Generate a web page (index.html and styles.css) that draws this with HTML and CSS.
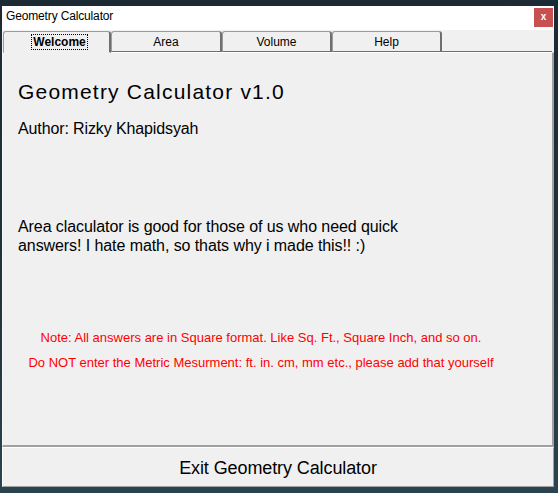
FILE: index.html
```html
<!DOCTYPE html>
<html>
<head>
<meta charset="utf-8">
<link rel="stylesheet" href="styles.css">
</head>
<body>
<div class="window">
  <div class="titlebar">
    <span class="title">Geometry Calculator</span>
    <span class="close">x</span>
  </div>
  <div class="tabstrip">
    <div class="tab tab-sel tab-w1"><span class="lbl focus">Welcome</span></div>
    <div class="tab tab-w2"><span class="lbl">Area</span></div>
    <div class="tab tab-w3"><span class="lbl">Volume</span></div>
    <div class="tab tab-w3"><span class="lbl">Help</span></div>
    <div class="tab-fill"></div>
  </div>
  <div class="panel">
    <h1 class="heading">Geometry Calculator v1.0</h1>
    <p class="author">Author: Rizky Khapidsyah</p>
    <p class="desc">Area claculator is good for those of us who need quick<br>answers! I hate math, so thats why i made this!! :)</p>
    <div class="notes">
      <p class="note">Note: All answers are in Square format. Like Sq. Ft., Square Inch, and so on.</p>
      <p class="note">Do NOT enter the Metric Mesurment: ft. in. cm, mm etc., please add that yourself</p>
    </div>
  </div>
  <div class="exit">Exit Geometry Calculator</div>
</div>
</body>
</html>
```
FILE: styles.css
```css
html, body {
  margin: 0;
  padding: 0;
}
body {
  width: 558px;
  height: 493px;
  overflow: hidden;
  background: linear-gradient(180deg, #1b2a33 0%, #22333c 60%, #2b4350 100%);
  font-family: "Liberation Sans", Arial, sans-serif;
  color: #000;
}
.window {
  margin-left: 2px;
  margin-top: 6px;
  width: 552px;
  background: #f0f0f0;
}
.titlebar {
  height: 24px;
  background: #fff;
  display: flex;
  align-items: flex-start;
  justify-content: space-between;
}
.title {
  font-size: 12px;
  line-height: 21px;
  padding-left: 4px;
  letter-spacing: -0.15px;
}
.close {
  margin-top: 2px;
  margin-right: 1px;
  width: 19px;
  height: 19px;
  background: #c75050;
  color: #fff;
  font-weight: bold;
  font-size: 10px;
  line-height: 18px;
  text-align: center;
}
.tabstrip {
  display: flex;
  padding-top: 1px;
  padding-left: 1px;
  height: 21px;
}
.tab {
  box-sizing: border-box;
  height: 21px;
  border-top: 1px solid #9c9c9c;
  border-left: 1px solid #9c9c9c;
  border-right: 2px solid #6f6f6f;
  border-bottom: 1px solid #6f6f6f;
  border-radius: 3px 3px 0 0;
  background: #f0f0f0;
  display: flex;
  justify-content: center;
  align-items: flex-start;
  padding-top: 2px;
  font-size: 12px;
}
.tab-w1 { width: 108px; }
.tab-w2 { width: 111px; }
.tab-w3 { width: 110px; }
.tab-sel {
  border-bottom-color: #f0f0f0;
  height: 22px;
  margin-bottom: -1px;
  position: relative;
  z-index: 1;
}
.tab-fill {
  flex: 1;
  border-bottom: 1px solid #6f6f6f;
  margin-right: 2px;
}
.lbl {
  display: inline-block;
  line-height: 14px;
  padding: 0 1px;
  border: 1px solid transparent;
}
.tab-sel .lbl {
  margin-left: 6px;
}
.focus {
  font-weight: bold;
  border: 1px dotted #000;
}
.panel {
  height: 392px;
  border-top: 1px solid #fff;
  border-left: 1px solid #f7f7f7;
  border-right: 2px solid #a0a0a0;
  border-bottom: 2px solid #a0a0a0;
  padding-left: 15px;
  overflow: hidden;
}
.heading {
  margin: 27px 0 0 0;
  font-size: 21px;
  line-height: 24px;
  font-weight: normal;
  letter-spacing: 1.2px;
}
.author {
  margin: 15px 0 0 0;
  font-size: 16px;
  line-height: 20px;
  letter-spacing: -0.12px;
}
.desc {
  margin: 78px 0 0 0;
  font-size: 16px;
  line-height: 19px;
  letter-spacing: -0.08px;
}
.notes {
  margin-top: 70px;
  width: 486px;
  text-align: center;
}
.note {
  margin: 0;
  color: #ff0000;
  font-size: 13px;
  line-height: 25px;
  white-space: nowrap;
}
.exit {
  height: 34px;
  padding-top: 4px;
  border-top: 1px solid #fff;
  border-left: 1px solid #fff;
  border-right: 1px solid #a0a0a0;
  border-bottom: 1px solid #a0a0a0;
  text-align: center;
  font-size: 18px;
  line-height: 32px;
  letter-spacing: -0.1px;
  background: #f0f0f0;
}
```
